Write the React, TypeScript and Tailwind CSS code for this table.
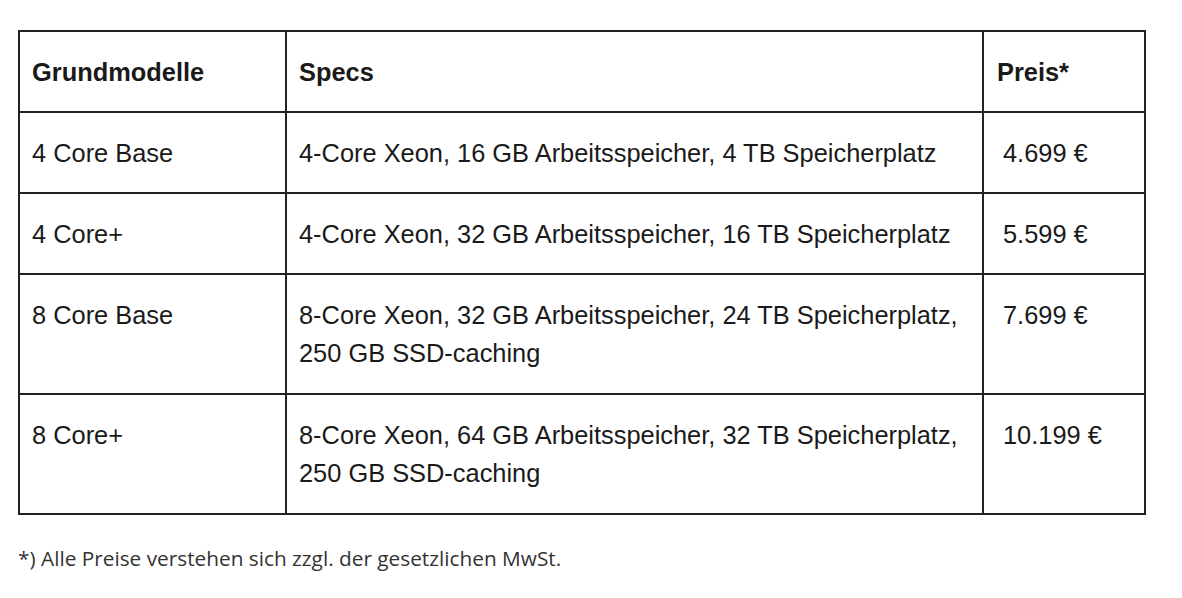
import React from 'react'

type Row = { model: string; specs: string[]; price: string }

const rows: Row[] = [
  { model: '4 Core Base', specs: ['4-Core Xeon, 16 GB Arbeitsspeicher, 4 TB Speicherplatz'], price: '4.699 €' },
  { model: '4 Core+', specs: ['4-Core Xeon, 32 GB Arbeitsspeicher, 16 TB Speicherplatz'], price: '5.599 €' },
  {
    model: '8 Core Base',
    specs: ['8-Core Xeon, 32 GB Arbeitsspeicher, 24 TB Speicherplatz,', '250 GB SSD-caching'],
    price: '7.699 €'
  },
  {
    model: '8 Core+',
    specs: ['8-Core Xeon, 64 GB Arbeitsspeicher, 32 TB Speicherplatz,', '250 GB SSD-caching'],
    price: '10.199 €'
  }
]

export default function App(): React.ReactElement {
  return (
    <div className="min-h-[598px] w-[1182px] bg-white pl-[18px] pt-[30px] text-[#1a1a1a]">
      <table
        className="w-[1126px] table-fixed border-collapse text-[25.4px] leading-[38px]"
        style={{ fontFamily: '"Liberation Sans", Arial, sans-serif' }}
      >
        <colgroup>
          <col className="w-[267px]" />
          <col className="w-[697px]" />
          <col className="w-[162px]" />
        </colgroup>
        <thead>
          <tr className="h-[81px]">
            <th className="border-2 border-[#222] px-[12px] text-left align-middle font-bold">Grundmodelle</th>
            <th className="border-2 border-[#222] px-[12px] text-left align-middle font-bold">Specs</th>
            <th className="border-2 border-[#222] px-[13px] text-left align-middle font-bold">Preis*</th>
          </tr>
        </thead>
        <tbody>
          {rows.map((r) => (
            <tr key={r.model} className={r.specs.length > 1 ? 'h-[120px]' : ''}>
              <td className="border-2 border-[#222] px-[12px] pt-[21px] pb-[20px] align-top">{r.model}</td>
              <td className="border-2 border-[#222] px-[12px] pt-[21px] pb-[20px] align-top">
                {r.specs.map((s) => (
                  <div key={s}>{s}</div>
                ))}
              </td>
              <td className="border-2 border-[#222] pl-[19px] pr-[12px] pt-[21px] pb-[20px] align-top">{r.price}</td>
            </tr>
          ))}
        </tbody>
      </table>
      <p
        className="mt-[29px] text-[20.8px] leading-[28px] text-[#333]"
        style={{ fontFamily: '"Open Sans", sans-serif' }}
      >
        *) Alle Preise verstehen sich zzgl. der gesetzlichen MwSt.
      </p>
    </div>
  )
}
